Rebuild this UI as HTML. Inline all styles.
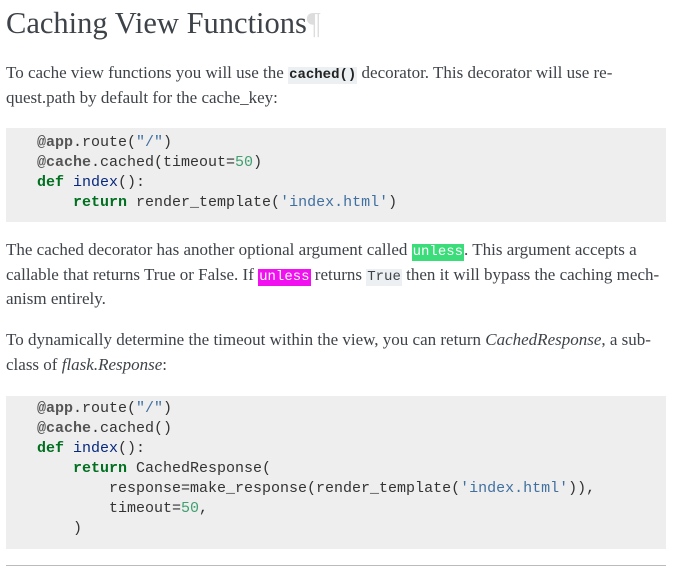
<!DOCTYPE html>
<html><head><style>
body{margin:0;background:#fff;width:678px;height:570px;overflow:hidden;font-family:"Liberation Serif",serif;color:#3e4349;}
h1{position:absolute;left:6px;top:3px;margin:0;font-weight:normal;font-size:30.5px;line-height:40px;color:#3e4349;}
h1 span{color:#ddd;}
p{position:absolute;left:6px;margin:0;font-size:17px;line-height:24.5px;white-space:nowrap;}
code,pre{font-family:"Liberation Mono",monospace;}
p code{line-height:10px;display:inline-block;padding:3px 1px 4px;}
pre{position:absolute;left:6px;width:629px;margin:0;background:#eeeeee;padding:0 0 0 31px;font-size:15px;line-height:20px;color:#333;}
.k{color:#007020;font-weight:bold}.b{font-weight:bold;color:#555}.s{color:#4070a0}.n{color:#40a070}.f{color:#06287e}
.c{background:#ecf0f3;font-size:14px;}
hr{position:absolute;left:6px;top:565px;width:660px;margin:0;border:0;border-top:1px solid #bbb;}
</style></head><body>
<h1>Caching View Functions<span>¶</span></h1>
<p style="top:61px">To cache view functions you will use the <code class="c" style="font-weight:bold;color:#222">cached()</code> decorator. This decorator will use re-<br>quest.path by default for the cache_key:</p>
<pre style="top:128px;height:74px;padding-top:5px;padding-bottom:15px"><span class="b">@app</span>.route(<span class="s">"/"</span>)
<span class="b">@cache</span>.cached(timeout=<span class="n">50</span>)
<span class="k">def</span> <span class="f">index</span>():
    <span class="k">return</span> render_template(<span class="s">'index.html'</span>)</pre>
<p style="top:238px">The cached decorator has another optional argument called <code style="background:#3bdc7a;color:#fff;font-size:14px">unless</code>. This argument accepts a<br>callable that returns True or False. If <code style="background:#f010f0;color:#fff;font-size:14px">unless</code> returns <code class="c">True</code> then it will bypass the caching mech-<br>anism entirely.</p>
<p style="top:328px">To dynamically determine the timeout within the view, you can return <i>CachedResponse</i>, a sub-<br>class of <i>flask.Response</i>:</p>
<pre style="top:396px;height:138px;padding-top:3px;padding-bottom:12px"><span class="b">@app</span>.route(<span class="s">"/"</span>)
<span class="b">@cache</span>.cached()
<span class="k">def</span> <span class="f">index</span>():
    <span class="k">return</span> CachedResponse(
        response=make_response(render_template(<span class="s">'index.html'</span>)),
        timeout=<span class="n">50</span>,
    )</pre>
<hr>
</body></html>
